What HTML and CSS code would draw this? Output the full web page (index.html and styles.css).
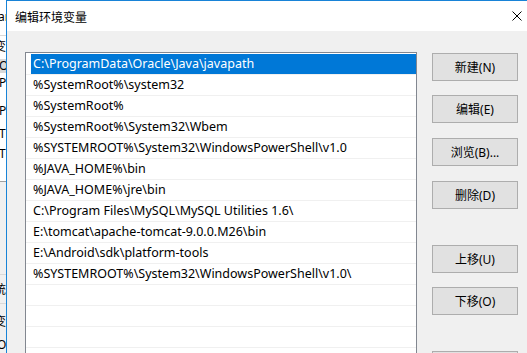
FILE: index.html
```html
<!DOCTYPE html>
<html lang="zh-CN">
<head>
    <meta charset="utf-8">
    <title>编辑环境变量</title>
    <link rel="stylesheet" href="styles.css">
</head>
<body>
<div class="desk">

    <!-- the window behind the dialog, only a sliver shows -->
    <div class="behind">
        <div class="behind-top"><span class="frag f-var">Var</span></div>
        <div class="behind-list">
            <span class="frag f1">变</span>
            <span class="frag f2 sel">O</span>
            <span class="frag f3">Pa</span>
            <span class="frag f4">PT</span>
            <span class="frag f5">TE</span>
            <span class="frag f6">TM</span>
        </div>
        <div class="behind-bottom">
            <div class="bline"></div>
            <span class="frag f7">统</span>
            <div class="bline"></div>
            <span class="frag f8">变</span>
            <span class="frag f9">O</span>
        </div>
    </div>

    <section class="dialog">
        <header class="titlebar">
            <span class="title">编辑环境变量</span>
            <span class="close">
                <svg width="10" height="10" viewBox="0 0 10 10">
                    <path d="M0.5 0.5 L9.5 9.5 M9.5 0.5 L0.5 9.5" stroke="#000" stroke-width="1" fill="none"/>
                </svg>
            </span>
        </header>

        <div class="dialog-body">
            <div class="pathlist">
                <div class="row selected"><span>C:\ProgramData\Oracle\Java\javapath</span></div>
                <div class="row"><span>%SystemRoot%\system32</span></div>
                <div class="row"><span>%SystemRoot%</span></div>
                <div class="row"><span>%SystemRoot%\System32\Wbem</span></div>
                <div class="row"><span>%SYSTEMROOT%\System32\WindowsPowerShell\v1.0</span></div>
                <div class="row"><span>%JAVA_HOME%\bin</span></div>
                <div class="row"><span>%JAVA_HOME%\jre\bin</span></div>
                <div class="row"><span>C:\Program Files\MySQL\MySQL Utilities 1.6\</span></div>
                <div class="row"><span>E:\tomcat\apache-tomcat-9.0.0.M26\bin</span></div>
                <div class="row"><span>E:\Android\sdk\platform-tools</span></div>
                <div class="row"><span>%SYSTEMROOT%\System32\WindowsPowerShell\v1.0\</span></div>
                <div class="row"><span></span></div>
                <div class="row"><span></span></div>
                <div class="row"><span></span></div>
                <div class="row"><span></span></div>
            </div>

            <div class="buttons">
                <button class="btn">新建(N)</button>
                <button class="btn g14">编辑(E)</button>
                <button class="btn">浏览(B)...</button>
                <button class="btn">删除(D)</button>
                <button class="btn g36">上移(U)</button>
                <button class="btn g14">下移(O)</button>
                <button class="btn g36">编辑文本(T)...</button>
            </div>
        </div>
    </section>
</div>
</body>
</html>
```

FILE: styles.css
```css
body {
    margin: 0;
    background-color: #f0f0f0;
    font-family: "Noto Sans", "Noto Sans CJK SC", sans-serif;
    font-size: 12px;
    color: #000;
}
.desk {
    display: flex;
    width: 527px;
    height: 353px;
    overflow: hidden;
}

/* background window */
.behind {
    flex: none;
    width: 6px;
    display: flex;
    flex-direction: column;
    overflow: hidden;
    background-color: #f0f0f0;
}
.behind-top {
    height: 35px;
    background-color: #fff;
    border-bottom: 1px solid #d9d9d9;
}
.behind-list {
    height: 145px;
    background-color: #fff;
    border-bottom: 1px solid #a0a0a0;
    display: flex;
    flex-direction: column;
}
.behind-bottom {
    flex: 1;
    display: flex;
    flex-direction: column;
    padding-top: 92px;
}
.frag {
    display: block;
    white-space: nowrap;
    line-height: 14px;
    height: 14px;
    flex: none;
}
.f-var { margin: 10px 0 0 -9px; }
.f1 { margin: 4px 0 0 -6px; }
.f2 { margin: 5px 0 0 -1px; }
.f2.sel { background-color: #d9d9d9; }
.f3 { margin: 3px 0 0 -1px; }
.f4 { margin: 14px 0 0 -1px; }
.f5 { margin: 9px 0 0 -1px; }
.f6 { margin: 6px 0 0 -1px; }
.bline { height: 1px; background-color: #d9d9d9; flex: none; }
.f7 { margin: 8px 0 6px -6px; }
.f8 { margin: 11px 0 0 -6px; }
.f9 { margin: 9px 0 0 -3px; }

/* dialog */
.dialog {
    flex: none;
    width: 533px;
    border-left: 1px solid #1883d7;
    border-top: 1px solid #1883d7;
    display: flex;
    flex-direction: column;
}
.titlebar {
    height: 30px;
    background-color: #fff;
    display: flex;
    align-items: center;
    justify-content: space-between;
    padding-left: 8px;
}
.title {
    font-family: "Noto Sans CJK SC", sans-serif;
    font-size: 12px;
}
.close {
    width: 46px;
    height: 30px;
    display: flex;
    align-items: center;
    justify-content: center;
}
.dialog-body {
    flex: 1;
    background-color: #f0f0f0;
    display: flex;
    align-items: flex-start;
    padding: 21px 0 0 18px;
}

.pathlist {
    width: 390px;
    height: 330px;
    border: 1px solid #828790;
    background-color: #fff;
    padding-top: 1px;
}
.row {
    height: 20px;
    border-bottom: 1px solid #f0f0f0;
    display: flex;
}
.row span {
    flex: 1;
    margin-left: 5px;
    padding-left: 2px;
    font-size: 12.5px;
    line-height: 20px;
    white-space: nowrap;
}
.row.selected span {
    background-color: #0078d7;
    color: #fff;
}

.buttons {
    margin-left: 15px;
    padding-top: 1px;
    display: flex;
    flex-direction: column;
}
.btn {
    width: 86px;
    height: 28px;
    margin-top: 15px;
    background-color: #e1e1e1;
    border: 1px solid #adadad;
    font-family: "Noto Sans", "Noto Sans CJK SC", sans-serif;
    font-size: 12px;
    color: #000;
    padding: 0;
}
.btn:first-child { margin-top: 0; }
.btn.g14 { margin-top: 14px; }
.btn.g36 { margin-top: 36px; }
```
